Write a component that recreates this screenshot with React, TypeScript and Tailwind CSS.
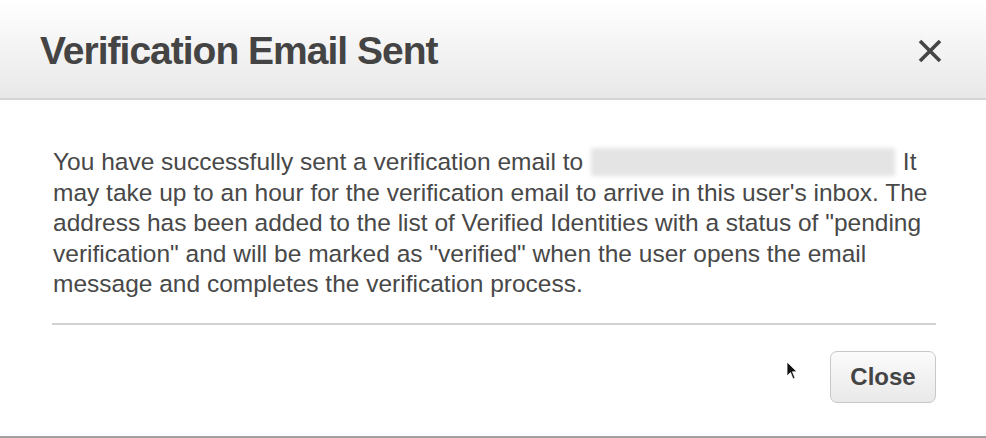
import React from "react";

export default function App() {
  return (
    <div className="relative w-[986px] h-[438px] bg-white overflow-hidden" style={{ fontFamily: '"Liberation Sans", Arial, sans-serif' }}>
      <div className="flex flex-col h-full border-b-2 border-b-[#a0a0a0]">
        <div className="h-[100px] flex items-center justify-between pl-[40px] pr-[44px] bg-gradient-to-b from-[#ffffff] to-[#e8e8e8] border-b-2 border-b-[#d4d4d4] shrink-0">
          <h1 className="text-[39px] font-bold tracking-[-1px] text-[#444444] leading-none mt-[2px]">Verification Email Sent</h1>
          <svg width="24" height="24" viewBox="0 0 24 24" className="mt-[4px]">
            <path d="M2 2 L22 22 M22 2 L2 22" stroke="#454545" strokeWidth="3.6" strokeLinecap="butt" />
          </svg>
        </div>
        <div className="flex flex-col flex-1 px-[52px]">
          <p className="pt-[47px] pl-[1px] text-[24.5px] leading-[30.5px] text-[#484848] whitespace-nowrap">
            You have successfully sent a verification email to{" "}
            <span className="inline-block align-middle w-[304px] h-[28px] mx-[1px] -mt-[4px] bg-[#e4e4e4] blur-[2px] rounded-[2px]" />{" "}
            It
            <br />
            may take up to an hour for the verification email to arrive in this user's inbox. The
            <br />
            address has been added to the list of Verified Identities with a status of "pending
            <br />
            verification" and will be marked as "verified" when the user opens the email
            <br />
            message and completes the verification process.
          </p>
          <div className="mt-[23px] h-[2px] bg-[#d2d2d2] w-[884px]" />
          <div className="flex justify-end w-[884px] pt-[26px]">
            <button className="h-[52px] w-[106px] rounded-[7px] border border-[#c8c8c8] bg-gradient-to-b from-[#fbfbfb] to-[#e9e9e9] text-[24px] font-bold text-[#444444]">
              Close
            </button>
          </div>
        </div>
      </div>
      <svg className="absolute left-[786px] top-[361px]" width="12" height="20" viewBox="0 0 12 20">
        <path d="M1 1 L1 15 L4.5 11.5 L7 18 L9 17 L6.5 10.8 L11 10.8 Z" fill="#111" stroke="#fff" strokeWidth="0.8" />
      </svg>
    </div>
  );
}
